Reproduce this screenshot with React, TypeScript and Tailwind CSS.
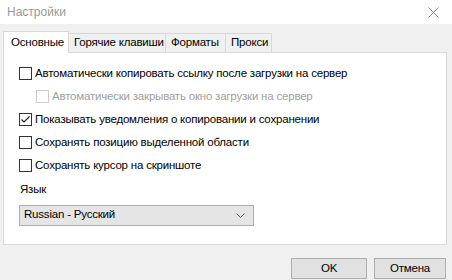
import React from "react";

function Box({ checked, disabled }: { checked?: boolean; disabled?: boolean }) {
  return (
    <span
      className={`relative flex h-[13px] w-[13px] shrink-0 items-center justify-center border bg-white ${
        disabled ? "border-[#cccccc]" : "border-[#333333]"
      }`}
    >
      {checked ? (
        <svg width="11" height="11" viewBox="0 0 11 11" className="absolute left-[0px] top-[0px]">
          <path d="M1.5 5.5 L4 8 L9.5 2.5" fill="none" stroke="#222" strokeWidth="1.2" />
        </svg>
      ) : null}
    </span>
  );
}

function Check({
  label,
  checked,
  disabled,
  indent,
}: {
  label: string;
  checked?: boolean;
  disabled?: boolean;
  indent?: boolean;
}) {
  return (
    <div className={`flex h-[13px] items-center gap-[3px] ${indent ? "pl-[17px]" : ""}`}>
      <Box checked={checked} disabled={disabled} />
      <span className={`whitespace-nowrap leading-none ${disabled ? "text-[#a0a0a0]" : "text-black"}`}>
        {label}
      </span>
    </div>
  );
}

const tabs = [
  { label: "Горячие клавиши", w: "w-[97px]" },
  { label: "Форматы", w: "w-[60px]" },
  { label: "Прокси", w: "w-[46px]" },
];

export default function App() {
  return (
    <div className="flex h-[280px] w-[452px] flex-col bg-[#f0f0f0] font-['Liberation_Sans',sans-serif] text-[11.5px] tracking-[-0.2px] text-black">
      <div className="flex h-[24px] items-center justify-between bg-white pl-[7px] pr-[13px]">
        <span className="text-[12px] tracking-normal text-[#999999]">Настройки</span>
        <svg width="11" height="11" viewBox="0 0 11 11">
          <path d="M0.5 0.5 L10.5 10.5 M10.5 0.5 L0.5 10.5" stroke="#8a8a8a" strokeWidth="1" />
        </svg>
      </div>

      <div className="px-[3px] pt-[7px]">
        <div className="relative z-10 -mb-px flex h-[22px] items-end whitespace-nowrap">
          <div className="flex h-[22px] w-[66px] items-center border border-b-0 border-[#d9d9d9] bg-white pl-[7px]">
            Основные
          </div>
          {tabs.map((t) => (
            <div
              key={t.label}
              className={`flex h-[20px] ${t.w} items-center border border-l-0 border-[#d9d9d9] bg-[#f0f0f0] pl-[5px]`}
            >
              {t.label}
            </div>
          ))}
        </div>
        <div className="flex h-[193px] w-[444px] flex-col border border-[#d9d9d9] bg-white pl-[15px] pt-[14px]">
          <div className="flex flex-col gap-[10px]">
            <Check label="Автоматически копировать ссылку после загрузки на сервер" />
            <Check label="Автоматически закрывать окно загрузки на сервер" disabled indent />
            <Check label="Показывать уведомления о копировании и сохранении" checked />
            <Check label="Сохранять позицию выделенной области" />
            <Check label="Сохранять курсор на скриншоте" />
          </div>
          <div className="mt-[12px] pl-[1px] leading-none">Язык</div>
          <div className="mt-[9px] flex h-[21px] w-[235px] items-center justify-between border border-[#adadad] bg-[#e5e5e5] pl-[4px] pr-[8px]">
            <span>Russian - Русский</span>
            <svg width="9" height="5" viewBox="0 0 9 5">
              <path d="M0.5 0.5 L4.5 4.5 L8.5 0.5" fill="none" stroke="#555" strokeWidth="1" />
            </svg>
          </div>
        </div>
      </div>

      <div className="flex justify-end gap-[7px] pr-[6px] pt-[13px]">
        <button className="flex h-[21px] w-[76px] items-center justify-center border border-[#adadad] bg-[#e1e1e1]">
          OK
        </button>
        <button className="flex h-[21px] w-[72px] items-center justify-center border border-[#adadad] bg-[#e1e1e1]">
          Отмена
        </button>
      </div>
    </div>
  );
}
